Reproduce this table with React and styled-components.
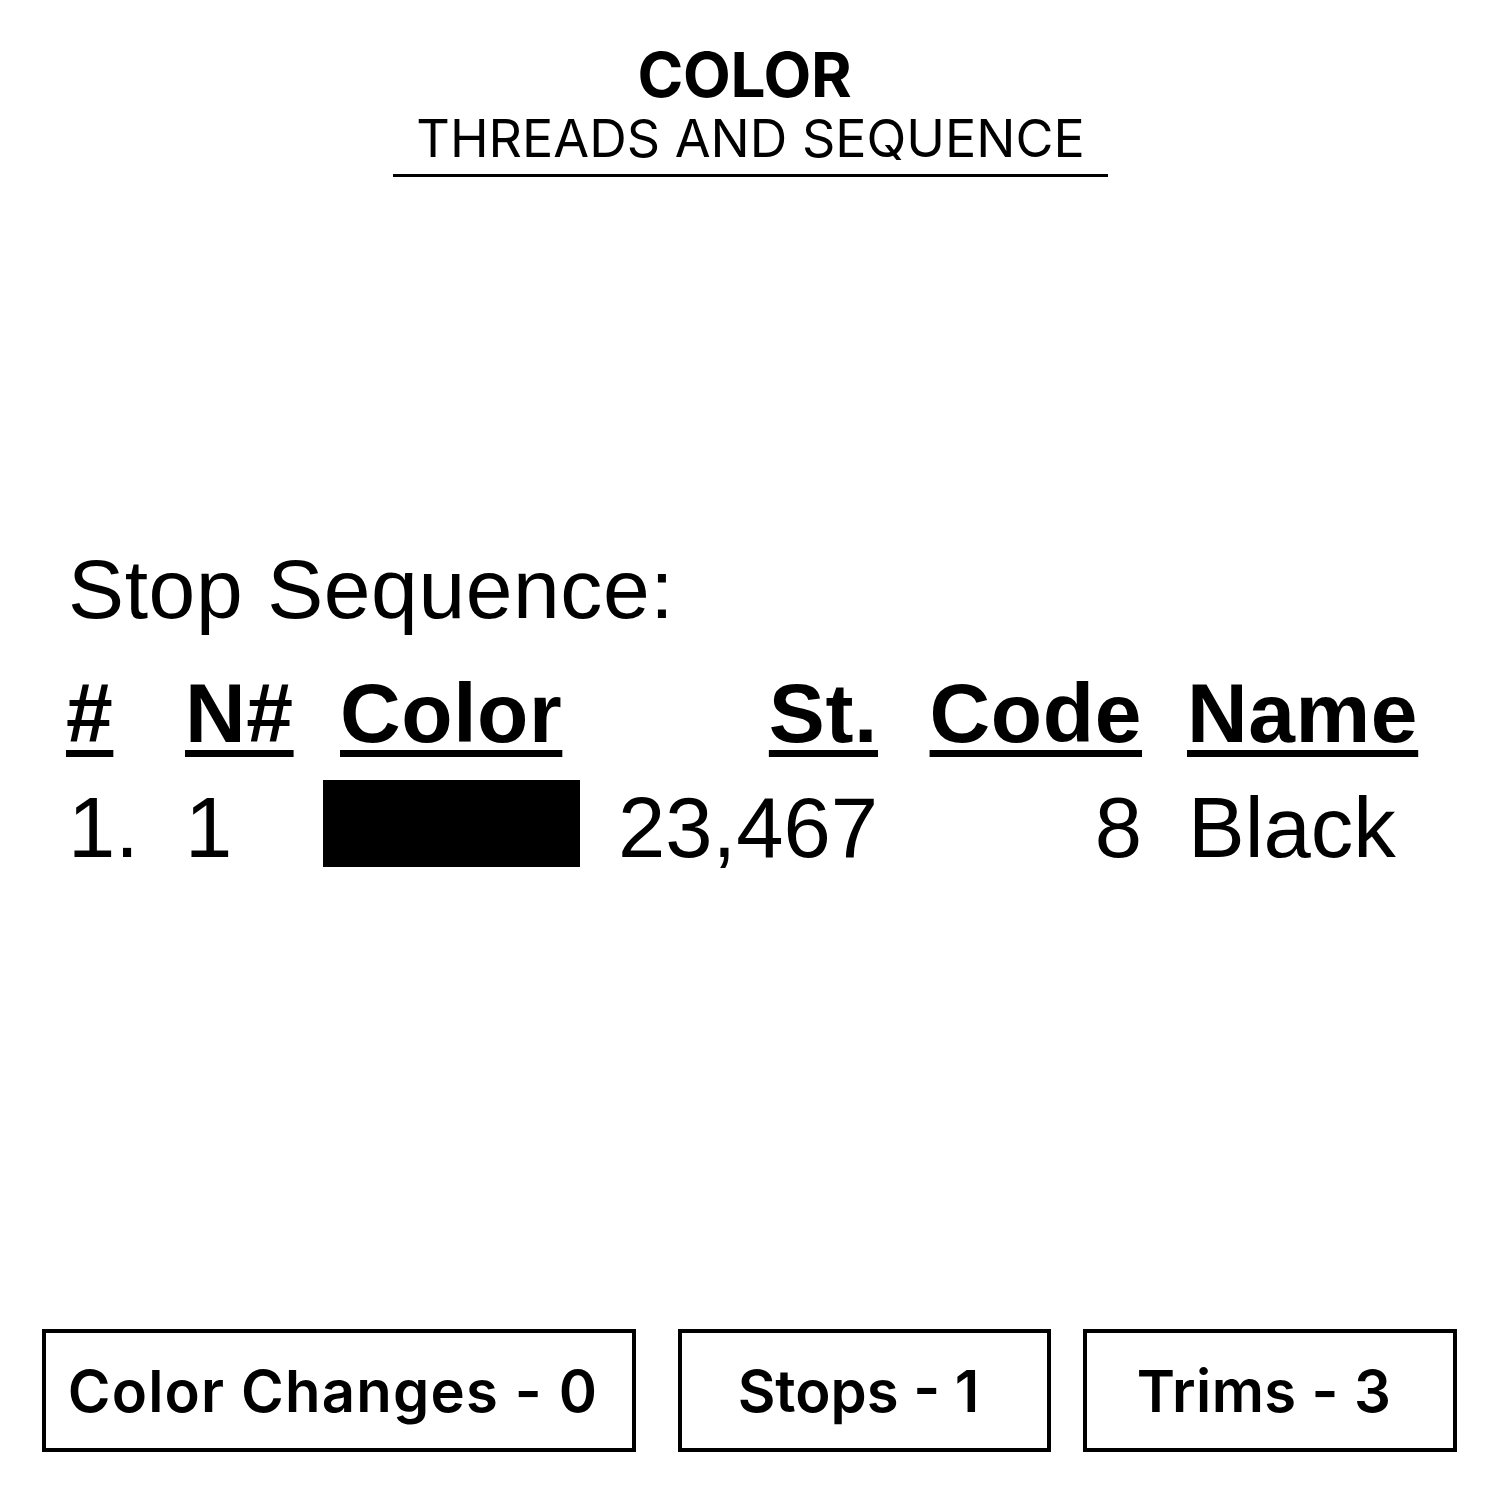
import React from "react";
import styled, { createGlobalStyle } from "styled-components";

const GlobalStyle = createGlobalStyle`
  html, body {
    margin: 0;
    padding: 0;
    background: #ffffff;
  }
`;

const Page = styled.div`
  width: 1500px;
  height: 1500px;
  background: #ffffff;
  color: #000000;
  display: flex;
  flex-direction: column;
  align-items: center;
  box-sizing: border-box;
  padding-top: 44px;
`;

const Heading = styled.div`
  display: flex;
  flex-direction: column;
  align-items: center;
  width: 715px;
  border-bottom: 3px solid #000000;
  padding-bottom: 9px;
  margin-left: 1px;
`;

const Title = styled.div`
  font-family: Inter, "Open Sans", sans-serif;
  font-weight: 700;
  font-size: 62px;
  line-height: 1;
  letter-spacing: -0.3px;
  margin-right: 12px;
`;

const Subtitle = styled.div`
  font-family: Inter, "Open Sans", sans-serif;
  font-weight: 400;
  font-size: 52px;
  line-height: 1;
  margin-top: 7px;
`;

const Sheet = styled.div`
  align-self: stretch;
  padding-left: 66px;
  margin-top: 370px;
  font-family: "Liberation Sans", Arial, sans-serif;
`;

const SheetTitle = styled.div`
  font-size: 84px;
  line-height: 1;
  padding-left: 2px;
  letter-spacing: 0.6px;
`;

const Table = styled.div`
  display: grid;
  grid-template-columns: 119px 138px 257px 298px 264px auto;
  grid-template-rows: 84px 87px;
  row-gap: 25px;
  margin-top: 40px;
  align-items: center;
`;

const HeadCell = styled.div`
  font-size: 84px;
  font-weight: 700;
  line-height: 1;
  letter-spacing: 0.6px;
  text-decoration: underline;
  text-decoration-thickness: 7px;
  text-underline-offset: 8px;
  text-align: ${(p) => (p.$right ? "right" : "left")};
  padding-left: ${(p) => p.$indent || 0}px;
  white-space: nowrap;
`;

const Cell = styled.div`
  font-size: 85px;
  line-height: 1;
  padding-top: 8px;
  text-align: ${(p) => (p.$right ? "right" : "left")};
  padding-left: ${(p) => p.$indent || 0}px;
  white-space: nowrap;
`;

const Swatch = styled.div`
  width: 257px;
  height: 87px;
  background: ${(p) => p.$color};
`;

const Footer = styled.div`
  margin-top: auto;
  margin-bottom: 48px;
  align-self: stretch;
  padding-left: 42px;
  display: flex;
`;

const StatBox = styled.div`
  width: ${(p) => p.$width}px;
  height: 123px;
  box-sizing: border-box;
  border: 4px solid #000000;
  margin-right: ${(p) => p.$gap || 0}px;
  display: flex;
  align-items: center;
  justify-content: center;
  font-family: Inter, "Open Sans", sans-serif;
  font-weight: 600;
  font-size: 58px;
  letter-spacing: ${(p) => p.$tracking}px;
  padding-right: 12px;
`;

export default function App() {
  return (
    <>
      <GlobalStyle />
      <Page>
        <Heading>
          <Title>COLOR</Title>
          <Subtitle>THREADS AND SEQUENCE</Subtitle>
        </Heading>

        <Sheet>
          <SheetTitle>Stop Sequence:</SheetTitle>
          <Table>
            <HeadCell>#</HeadCell>
            <HeadCell>N#</HeadCell>
            <HeadCell $indent={17}>Color</HeadCell>
            <HeadCell $right>St.</HeadCell>
            <HeadCell $right>Code</HeadCell>
            <HeadCell $indent={45}>Name</HeadCell>

            <Cell $indent={2}>1.</Cell>
            <Cell>1</Cell>
            <Swatch $color="#000000" />
            <Cell $right>23,467</Cell>
            <Cell $right>8</Cell>
            <Cell $indent={46}>Black</Cell>
          </Table>
        </Sheet>

        <Footer>
          <StatBox $width={594} $gap={42} $tracking={1.2}>Color Changes - 0</StatBox>
          <StatBox $width={373} $gap={32} $tracking={0}>Stops - 1</StatBox>
          <StatBox $width={374} $tracking={0.4}>Trims - 3</StatBox>
        </Footer>
      </Page>
    </>
  );
}
